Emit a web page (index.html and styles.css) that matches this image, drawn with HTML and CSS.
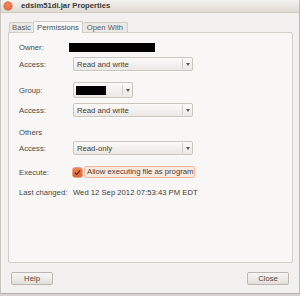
FILE: index.html
```html
<!DOCTYPE html>
<html>
<head>
<meta charset="utf-8">
<link rel="stylesheet" href="styles.css">
</head>
<body>
<div class="window">
  <div class="titlebar">
    <span class="close-btn"></span>
    <span class="title">edsim51di.jar Properties</span>
  </div>
  <div class="content">
    <div class="tabs">
      <div class="tab tab-basic">Basic</div>
      <div class="tab tab-active">Permissions</div>
      <div class="tab tab-open">Open With</div>
    </div>
    <div class="panel">
      <div class="row row-owner">
        <span class="label">Owner:</span>
        <span class="owner-box"></span>
      </div>
      <div class="row row-combo mt4">
        <span class="label">Access:</span>
        <div class="combo combo-wide"><span class="combo-text">Read and write</span><span class="combo-arrow"><i></i></span></div>
      </div>
      <div class="row row-group mt11">
        <span class="label">Group:</span>
        <div class="combo combo-group"><span class="group-box"></span><span class="combo-arrow"><i></i></span></div>
      </div>
      <div class="row row-combo mt5">
        <span class="label">Access:</span>
        <div class="combo combo-wide"><span class="combo-text">Read and write</span><span class="combo-arrow"><i></i></span></div>
      </div>
      <div class="row row-text mt9">
        <span class="label">Others</span>
      </div>
      <div class="row row-combo mt3">
        <span class="label">Access:</span>
        <div class="combo combo-wide"><span class="combo-text">Read-only</span><span class="combo-arrow"><i></i></span></div>
      </div>
      <div class="row row-exec mt12">
        <span class="label">Execute:</span>
        <span class="checkbox"><svg width="9" height="9" viewBox="0 0 9 9"><path d="M2 4.6 L3.8 6.4 L7.2 2.4" fill="none" stroke="#5a2a14" stroke-width="1.3"/></svg></span>
        <span class="exec-label">Allow executing file as program</span>
      </div>
      <div class="row row-text mt9">
        <span class="label">Last changed:</span>
        <span class="value">Wed 12 Sep 2012 07:53:43 PM EDT</span>
      </div>
    </div>
    <div class="buttons">
      <div class="btn">Help</div>
      <div class="btn">Close</div>
    </div>
  </div>
</div>
</body>
</html>
```

FILE: styles.css
```css
html, body {
  margin: 0;
  padding: 0;
  background: #d6d2cd;
}
body {
  width: 300px;
  height: 296px;
  overflow: hidden;
  font-family: "Liberation Sans", Arial, sans-serif;
  font-size: 7.7px;
  color: #4a4946;
}
.window {
  width: 298px;
  height: 293px;
  background: #f2f1f0;
  border-left: 1px solid #c9c4be;
  border-right: 1px solid #bfbab4;
  border-bottom: 1px solid #b8b3ad;
}
.titlebar {
  height: 12px;
  border-bottom: 1px solid #d3ccc3;
  background: linear-gradient(#f3f2ef, #e0dad3);
  display: flex;
  align-items: center;
}
.close-btn {
  width: 8px;
  height: 8px;
  border-radius: 50%;
  margin-left: 3px;
  background: radial-gradient(circle at 50% 40%, #f58a5c, #e0582a);
  box-shadow: 0 0 0 0.5px #c34c22;
}
.title {
  margin-left: 9px;
  font-weight: bold;
  color: #3c3b37;
  line-height: 12px;
}
.content {
  padding: 8px 6px 0 7px;
}
.tabs {
  display: flex;
  align-items: flex-end;
  height: 11px;
  padding-left: 1px;
  position: relative;
  z-index: 1;
}
.tab {
  height: 10px;
  line-height: 10px;
  border: 1px solid #d0cbc5;
  border-bottom: none;
  border-radius: 2px 2px 0 0;
  background: #ebe9e6;
  color: #5c5b58;
  box-sizing: border-box;
  text-align: center;
}
.tab-basic { width: 24px; border-right: none; }
.tab-active {
  width: 50px;
  height: 12px;
  line-height: 11px;
  background: #f8f7f6;
  margin-bottom: -1px;
  color: #4a4946;
}
.tab-open { width: 45px; border-left: none; }
.panel {
  height: 229px;
  border: 1px solid #d3cec8;
  border-radius: 0 2px 2px 2px;
  background: #f8f7f6;
  padding: 0 10px;
}
.row {
  display: flex;
  align-items: center;
}
.label {
  width: 54px;
  flex: none;
}
.row-owner { height: 12px; margin-top: 8px; }
.row-combo { height: 14px; }
.row-group { height: 16px; }
.row-text { height: 12px; }
.row-exec { height: 10px; }
.mt3 { margin-top: 3px; }
.mt4 { margin-top: 4px; }
.mt5 { margin-top: 5px; }
.mt9 { margin-top: 9px; }
.mt11 { margin-top: 11px; }
.mt12 { margin-top: 12px; }
.owner-box {
  width: 86px;
  height: 9px;
  background: #000;
  margin-left: -4px;
}
.combo {
  height: 14px;
  box-sizing: border-box;
  border: 1px solid #cac5bf;
  border-radius: 2px;
  background: linear-gradient(#fbfaf9, #ebe8e5);
  display: flex;
  align-items: center;
  box-shadow: 0 1px 0 rgba(255,255,255,0.6);
}
.combo-wide { width: 120px; }
.combo-group { width: 60px; height: 16px; }
.combo-text {
  flex: 1;
  padding-left: 3px;
  color: #3e3d3a;
}
.group-box {
  width: 30px;
  height: 9px;
  background: #000;
  margin-left: 2px;
  flex: none;
}
.combo-group .combo-arrow { margin-left: auto; }
.combo-arrow {
  width: 9px;
  height: 10px;
  border-left: 1px solid #d2cdc7;
  display: flex;
  align-items: center;
  justify-content: center;
  flex: none;
}
.combo-arrow i {
  width: 0;
  height: 0;
  border-left: 2.5px solid transparent;
  border-right: 2.5px solid transparent;
  border-top: 3px solid #5a5955;
}
.checkbox {
  width: 9px;
  height: 9px;
  border-radius: 1.5px;
  background: linear-gradient(#f0844f, #e0632f);
  box-shadow: 0 0 0 0.5px #c9562a;
  display: flex;
}
.exec-label {
  margin-left: 2px;
  height: 10px;
  line-height: 10px;
  padding: 0 1px 0 2px;
  background: #fde8de;
  border: 1px solid #f3b69e;
  border-radius: 2px;
  color: #3e3d3a;
}
.value { color: #3e3d3a; }
.buttons {
  display: flex;
  justify-content: space-between;
  margin-top: 9px;
  padding: 0 4px 0 3px;
}
.btn {
  width: 42px;
  height: 13px;
  box-sizing: border-box;
  border: 1px solid #bdb8b2;
  border-radius: 2px;
  background: linear-gradient(#f8f7f6, #e2dfdb);
  text-align: center;
  line-height: 11px;
  color: #4c4b48;
}
```
